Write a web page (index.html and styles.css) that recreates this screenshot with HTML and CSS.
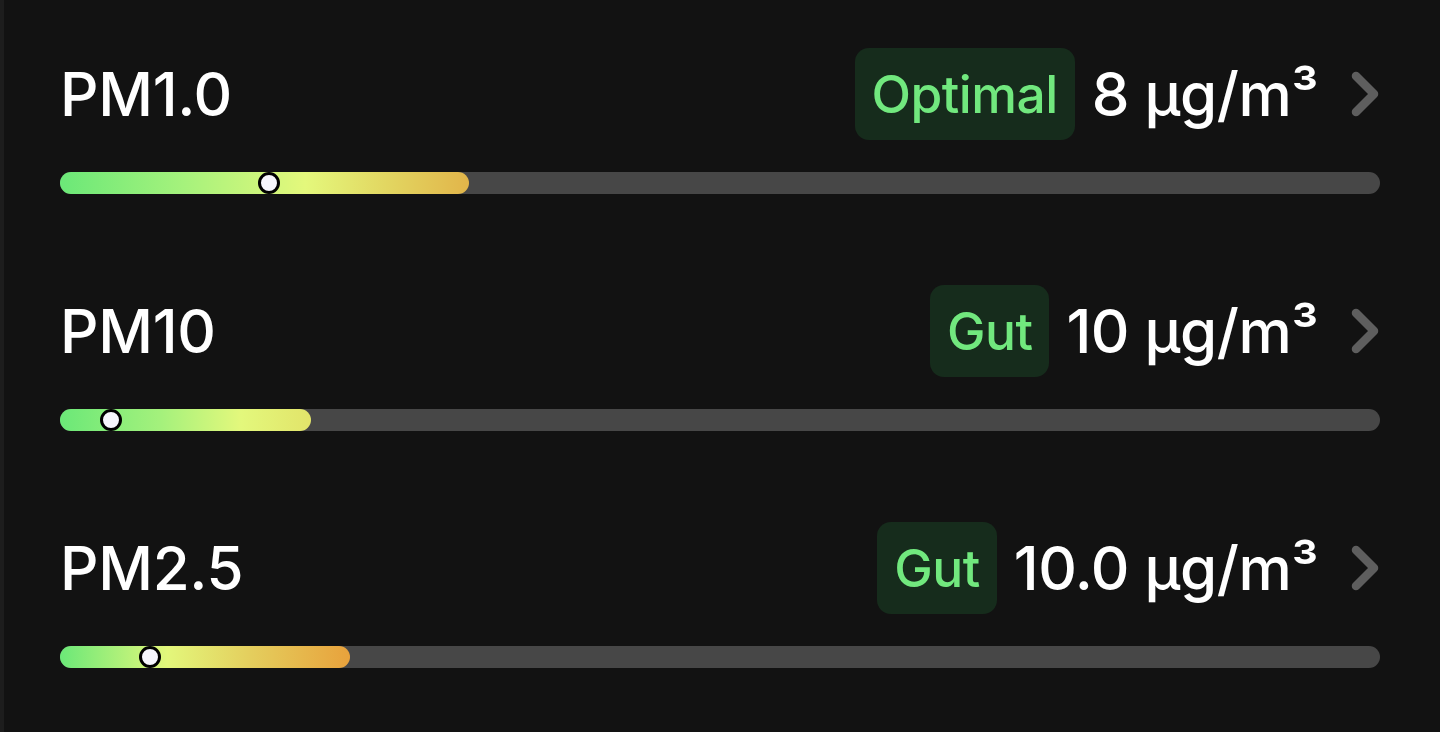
FILE: index.html
```html
<!DOCTYPE html>
<html lang="de">
<head>
<meta charset="utf-8">
<title>Feinstaub</title>
<link rel="stylesheet" href="styles.css">
</head>
<body>
<main class="panel">
  <section class="metric">
    <div class="metric-head">
      <span class="metric-name">PM1.0</span>
      <span class="badge">Optimal</span>
      <span class="metric-value">8 µg/m³</span>
      <svg class="chevron" viewBox="0 0 28 46" width="28" height="46" aria-hidden="true"><path d="M5 5 L23 23 L5 41" fill="none" stroke="#5e5e5e" stroke-width="8.5" stroke-linecap="round" stroke-linejoin="round"/></svg>
    </div>
    <div class="track">
      <div class="fill fill-pm1" style="width:409px"></div>
      <span class="thumb" style="left:209px"></span>
    </div>
  </section>
  <section class="metric">
    <div class="metric-head">
      <span class="metric-name">PM10</span>
      <span class="badge">Gut</span>
      <span class="metric-value">10 µg/m³</span>
      <svg class="chevron" viewBox="0 0 28 46" width="28" height="46" aria-hidden="true"><path d="M5 5 L23 23 L5 41" fill="none" stroke="#5e5e5e" stroke-width="8.5" stroke-linecap="round" stroke-linejoin="round"/></svg>
    </div>
    <div class="track">
      <div class="fill fill-pm10" style="width:251px"></div>
      <span class="thumb" style="left:51px"></span>
    </div>
  </section>
  <section class="metric">
    <div class="metric-head">
      <span class="metric-name">PM2.5</span>
      <span class="badge">Gut</span>
      <span class="metric-value">10.0 µg/m³</span>
      <svg class="chevron" viewBox="0 0 28 46" width="28" height="46" aria-hidden="true"><path d="M5 5 L23 23 L5 41" fill="none" stroke="#5e5e5e" stroke-width="8.5" stroke-linecap="round" stroke-linejoin="round"/></svg>
    </div>
    <div class="track">
      <div class="fill fill-pm25" style="width:290px"></div>
      <span class="thumb" style="left:90px"></span>
    </div>
  </section>
</main>
</body>
</html>
```
FILE: styles.css
```css
html, body {
  margin: 0;
  padding: 0;
  height: 100%;
  background: #121212;
}
body {
  font-family: "Inter", "Liberation Sans", sans-serif;
  color: #ffffff;
  border-left: 4px solid #1d1d1d;
  box-sizing: border-box;
  overflow: hidden;
}
.panel {
  display: flex;
  flex-direction: column;
  gap: 91px;
  padding: 48px 60px 0 56px;
}
.metric {
  display: flex;
  flex-direction: column;
  gap: 32px;
}
.metric-head {
  display: flex;
  align-items: center;
  height: 92px;
}
.metric-name {
  flex: 1;
  font-size: 60px;
  font-weight: 500;
  letter-spacing: -0.3px;
  line-height: 1;
}
.badge {
  display: flex;
  align-items: center;
  height: 92px;
  padding: 0 17px;
  border-radius: 14px;
  background: #162c1c;
  color: #71e87e;
  font-size: 51.5px;
  font-weight: 500;
  letter-spacing: -0.5px;
}
.metric-value {
  margin-left: 17px;
  font-size: 60px;
  font-weight: 500;
  letter-spacing: -0.5px;
  line-height: 1;
}
.chevron {
  margin-left: 33px;
  margin-right: 1px;
  flex: none;
}
.track {
  position: relative;
  height: 22px;
  border-radius: 11px;
  background: #474747;
}
.fill {
  height: 100%;
  border-radius: 11px;
}
.fill-pm1 {
  background: linear-gradient(90deg, #6be878 0%, #a5f27c 30%, #e4f87c 60%, #e2d661 80%, #e2b54a 100%);
}
.fill-pm10 {
  background: linear-gradient(90deg, #6be878 0%, #a4f17c 40%, #e3f87c 72%, #e2e46a 100%);
}
.fill-pm25 {
  background: linear-gradient(90deg, #6be878 0%, #e3f77b 37%, #e4cf5e 65%, #e8a23c 100%);
}
.thumb {
  position: absolute;
  top: 50%;
  width: 16px;
  height: 16px;
  margin: -11px 0 0 -11px;
  border: 3px solid #000000;
  border-radius: 50%;
  background: #f6f6fc;
}
```
